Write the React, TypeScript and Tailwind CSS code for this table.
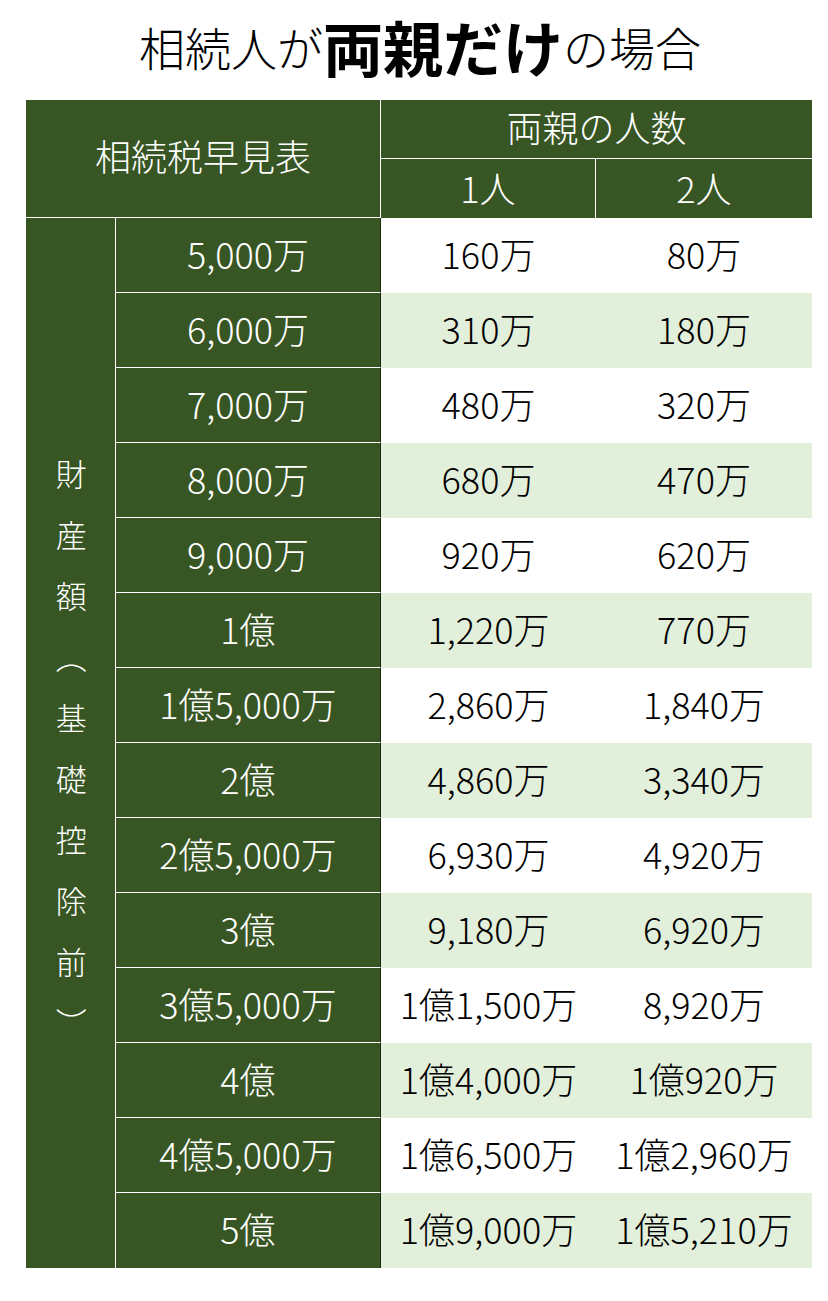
const rows: [string, string, string][] = [
  ["5,000万", "160万", "80万"],
  ["6,000万", "310万", "180万"],
  ["7,000万", "480万", "320万"],
  ["8,000万", "680万", "470万"],
  ["9,000万", "920万", "620万"],
  ["1億", "1,220万", "770万"],
  ["1億5,000万", "2,860万", "1,840万"],
  ["2億", "4,860万", "3,340万"],
  ["2億5,000万", "6,930万", "4,920万"],
  ["3億", "9,180万", "6,920万"],
  ["3億5,000万", "1億1,500万", "8,920万"],
  ["4億", "1億4,000万", "1億920万"],
  ["4億5,000万", "1億6,500万", "1億2,960万"],
  ["5億", "1億9,000万", "1億5,210万"],
];

export default function App() {
  return (
    <div
      className="h-[1301px] w-[828px] bg-white"
      style={{ fontFamily: '"Noto Sans CJK JP", "Noto Sans", sans-serif' }}
    >
      <div className="flex h-[100px] items-center justify-center pb-[8px] pl-[12px] text-black">
        <span className="text-[46px] font-light leading-none">相続人が</span>
        <span className="text-[60px] font-bold leading-none">両親だけ</span>
        <span className="text-[46px] font-light leading-none">の場合</span>
      </div>

      <div className="ml-[26px] grid w-[786px] grid-cols-[90px_265px_215px_216px] grid-rows-[59px_59px_repeat(14,75px)] text-[36px] font-light">
        <div className="col-span-2 row-span-2 flex items-center justify-center border-r border-b border-white bg-[#385623] pb-[8px] text-white">
          相続税早見表
        </div>
        <div className="col-span-2 flex items-center justify-center border-b border-white bg-[#385623] pb-[6px] text-white">
          両親の人数
        </div>
        <div className="flex items-center justify-center border-r border-white bg-[#385623] pb-[4px] text-white">1人</div>
        <div className="flex items-center justify-center bg-[#385623] pb-[4px] text-white">2人</div>

        <div className="row-span-14 flex items-center justify-center border-r border-white bg-[#385623] pt-[42px] text-white">
          <span className="text-[31px] tracking-[30px] [writing-mode:vertical-rl]">財産額（基礎控除前）</span>
        </div>
        {rows.map(([amount, one, two], i) => {
          const light = i % 2 === 1;
          const last = i === rows.length - 1;
          return [
            <div
              key={`a${i}`}
              className={`flex items-center justify-center border-r border-r-[#1a2a10] bg-[#385623] pb-[5px] text-white ${last ? "" : "border-b border-b-white"}`}
            >
              {amount}
            </div>,
            <div
              key={`b${i}`}
              className={`flex items-center justify-center pb-[6px] text-black ${light ? "bg-[#e2efda]" : "bg-white"}`}
            >
              {one}
            </div>,
            <div
              key={`c${i}`}
              className={`flex items-center justify-center pb-[6px] text-black ${light ? "bg-[#e2efda]" : "bg-white"}`}
            >
              {two}
            </div>,
          ];
        })}
      </div>
    </div>
  );
}
